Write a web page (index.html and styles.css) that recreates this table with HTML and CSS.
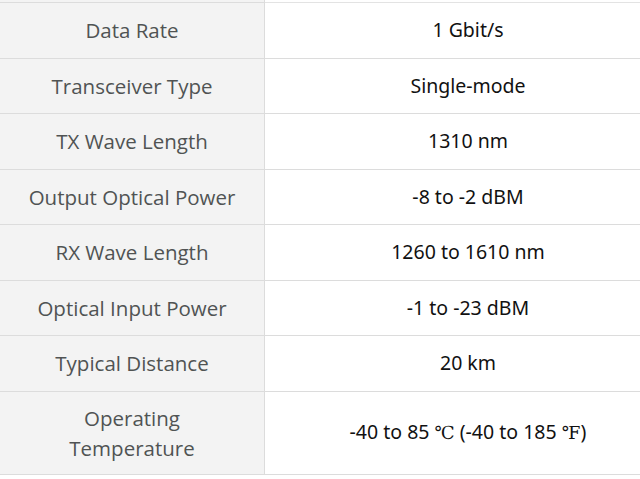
FILE: index.html
```html
<!DOCTYPE html>
<html>
<head>
<meta charset="utf-8">
<link rel="stylesheet" href="styles.css">
</head>
<body>
<div class="viewport">
  <div class="spec">
    <div class="cell key"></div><div class="cell val stub"></div>
    <div class="cell key">Data Rate</div><div class="cell val">1 Gbit/s</div>
    <div class="cell key">Transceiver Type</div><div class="cell val">Single-mode</div>
    <div class="cell key">TX Wave Length</div><div class="cell val">1310 nm</div>
    <div class="cell key">Output Optical Power</div><div class="cell val">-8 to -2 dBM</div>
    <div class="cell key">RX Wave Length</div><div class="cell val">1260 to 1610 nm</div>
    <div class="cell key">Optical Input Power</div><div class="cell val">-1 to -23 dBM</div>
    <div class="cell key">Typical Distance</div><div class="cell val">20 km</div>
    <div class="cell key"><span>Operating<br>Temperature</span></div><div class="cell val"><span>-40 to 85 <span class="unit">℃</span> (-40 to 185 <span class="unit">℉</span>)</span></div>
  </div>
</div>
</body>
</html>
```
FILE: styles.css
```css
html, body {
  margin: 0;
  padding: 0;
  background: #ffffff;
}
.viewport {
  width: 640px;
  height: 479px;
  overflow: hidden;
}
.spec {
  display: grid;
  grid-template-columns: 265px 406px;
  grid-template-rows: 3px repeat(7, 55.5px) 83px;
  width: 671px;
}
.cell {
  display: flex;
  align-items: center;
  justify-content: center;
  text-align: center;
  border-bottom: 1px solid #dcdcdc;
}
.key {
  background: #f3f3f3;
  border-right: 1px solid #dcdcdc;
  color: #505353;
  font-family: "Open Sans", "Noto Sans", sans-serif;
  font-size: 20.5px;
  line-height: 30px;
}
.val {
  background: #ffffff;
  color: #111111;
  font-family: "Noto Sans", "Open Sans", sans-serif;
  font-size: 19.5px;
  line-height: 30px;
}
.val.stub {
  border-bottom-color: #e3e3e3;
}
.unit {
  font-family: "DejaVu Serif", "Liberation Serif", serif;
  font-size: 18px;
}
```
